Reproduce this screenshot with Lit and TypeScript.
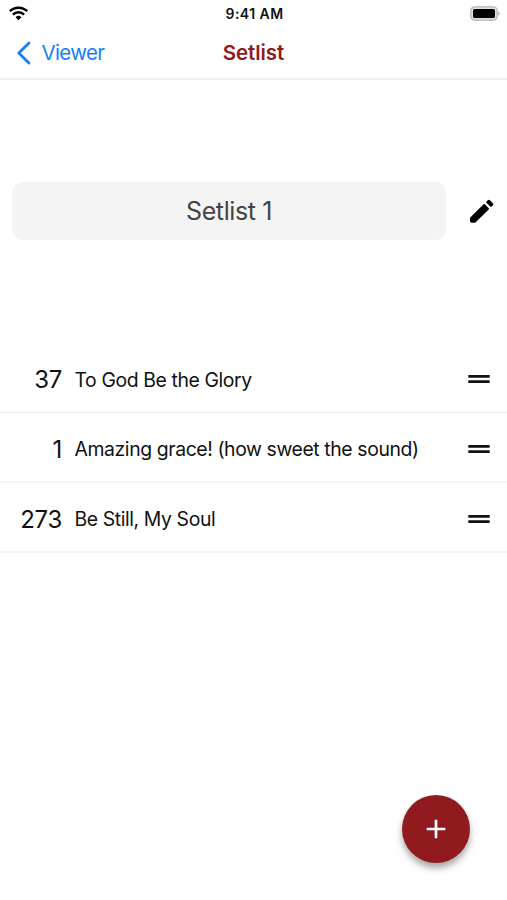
import { LitElement, html, css } from "lit";
import { customElement } from "lit/decorators.js";

interface Song {
  num: number;
  title: string;
}

const SONGS: Song[] = [
  { num: 37, title: "To God Be the Glory" },
  { num: 1, title: "Amazing grace! (how sweet the sound)" },
  { num: 273, title: "Be Still, My Soul" },
];

@customElement("app-root")
export class AppRoot extends LitElement {
  static styles = css`
    :host {
      display: flex;
      flex-direction: column;
      position: relative;
      height: 900px;
      overflow: hidden;
      background: #fff;
      color: #111;
      font-family: Inter, "Liberation Sans", sans-serif;
    }
    svg { display: block; flex: none; }
    .status, .nav {
      display: grid;
      grid-template-columns: 1fr auto 1fr;
      align-items: center;
      box-sizing: border-box;
    }
    .status { height: 27px; padding: 0 6px 0 8px; }
    .time { font-size: 14px; font-weight: 600; line-height: 16px; letter-spacing: 0.45px; }
    .battery { justify-self: end; }
    .nav { height: 53px; padding: 0 16px; border-bottom: 2px solid #efefef; }
    .back { display: flex; align-items: center; gap: 10.5px; color: #147efb; }
    .back span { font-size: 20.5px; line-height: 26px; letter-spacing: -0.65px; }
    .title { color: #901a1e; font-size: 20.5px; font-weight: 600; line-height: 26px; letter-spacing: -0.1px; }
    .name-row { display: flex; align-items: center; margin-top: 102px; padding: 0 9px 0 12px; gap: 20px; }
    .name {
      width: 434px;
      height: 58px;
      border-radius: 11px;
      background: #f4f4f4;
      color: #444;
      display: flex;
      align-items: center;
      justify-content: center;
      font-size: 25px;
      letter-spacing: -0.4px;
    }
    .list { margin-top: 103px; }
    .song {
      display: flex;
      align-items: center;
      box-sizing: border-box;
      height: 70px;
      padding: 3px 12px 0 0;
      border-bottom: 2px solid #f4f4f4;
    }
    .song:first-child { border-bottom: 1px solid #eee; }
    .num { width: 62px; padding-top: 1px; text-align: right; font-size: 24px; letter-spacing: -0.3px; }
    .text { flex: 1; margin-left: 12.5px; padding-top: 1px; font-size: 19.4px; letter-spacing: -0.4px; white-space: nowrap; }
    .fab {
      position: absolute;
      left: 402px;
      top: 795px;
      width: 68px;
      height: 68px;
      border-radius: 50%;
      background: #901a1e;
      display: flex;
      align-items: center;
      justify-content: center;
      box-shadow: 0 5px 7px rgba(0, 0, 0, 0.35);
    }
  `;

  render() {
    return html`
      <div class="status">
        <svg width="21" height="15" viewBox="0 0 21 15" fill="none" stroke="#000" stroke-width="2.5">
          <path d="M1.8 5.2a12.4 12.4 0 0 1 17.4 0" />
          <path d="M4.9 8.6a8 8 0 0 1 11.2 0" />
          <path d="M10.5 14.2l-3-3a4.4 4.4 0 0 1 6 0z" fill="#000" stroke="none" />
        </svg>
        <span class="time">9:41 AM</span>
        <svg class="battery" width="31" height="15" viewBox="0 0 31 15">
          <rect x=".8" y=".8" width="26.4" height="13.4" rx="4" fill="#e2e2e2" stroke="#b4b4b4" stroke-width="1.2" />
          <rect x="3" y="3" width="22" height="9" rx="1.6" fill="#000" />
          <path d="M28.3 5.2a2.6 2.6 0 0 1 0 4.6z" fill="#aaa" />
        </svg>
      </div>
      <div class="nav">
        <div class="back">
          <svg width="15" height="24" viewBox="0 0 15 24" fill="none" stroke="#147efb" stroke-width="2.8" stroke-linecap="round" stroke-linejoin="round">
            <path d="M13 2L2.8 12 13 22" />
          </svg>
          <span>Viewer</span>
        </div>
        <span class="title">Setlist</span>
      </div>
      <div class="name-row">
        <div class="name"><span>Setlist 1</span></div>
        <svg width="31" height="31" viewBox="0 0 24 24" stroke="#000" stroke-linejoin="round">
          <path stroke-width="1.4" d="M3.8 17.1v2.3q0 .7.7.7h2.3L17.1 9.9l-3-3z" />
          <path stroke-width="1.6" d="M18 3.9l2.2 2.2q.3.3 0 .6l-.9.9-2.8-2.8.9-.9q.3-.3.6 0z" />
        </svg>
      </div>
      <div class="list">
        ${SONGS.map(
          (s) => html`
            <div class="song">
              <span class="num">${s.num}</span>
              <span class="text">${s.title}</span>
              <svg width="32" height="32" viewBox="0 0 24 24" fill="#111">
                <path d="M20 9H4v2h16V9zM4 15h16v-2H4v2z" />
              </svg>
            </div>
          `
        )}
      </div>
      <div class="fab">
        <svg width="32" height="32" viewBox="0 0 24 24" fill="#fff">
          <path d="M19 13h-6v6h-2v-6H5v-2h6V5h2v6h6v2z" />
        </svg>
      </div>
    `;
  }
}
